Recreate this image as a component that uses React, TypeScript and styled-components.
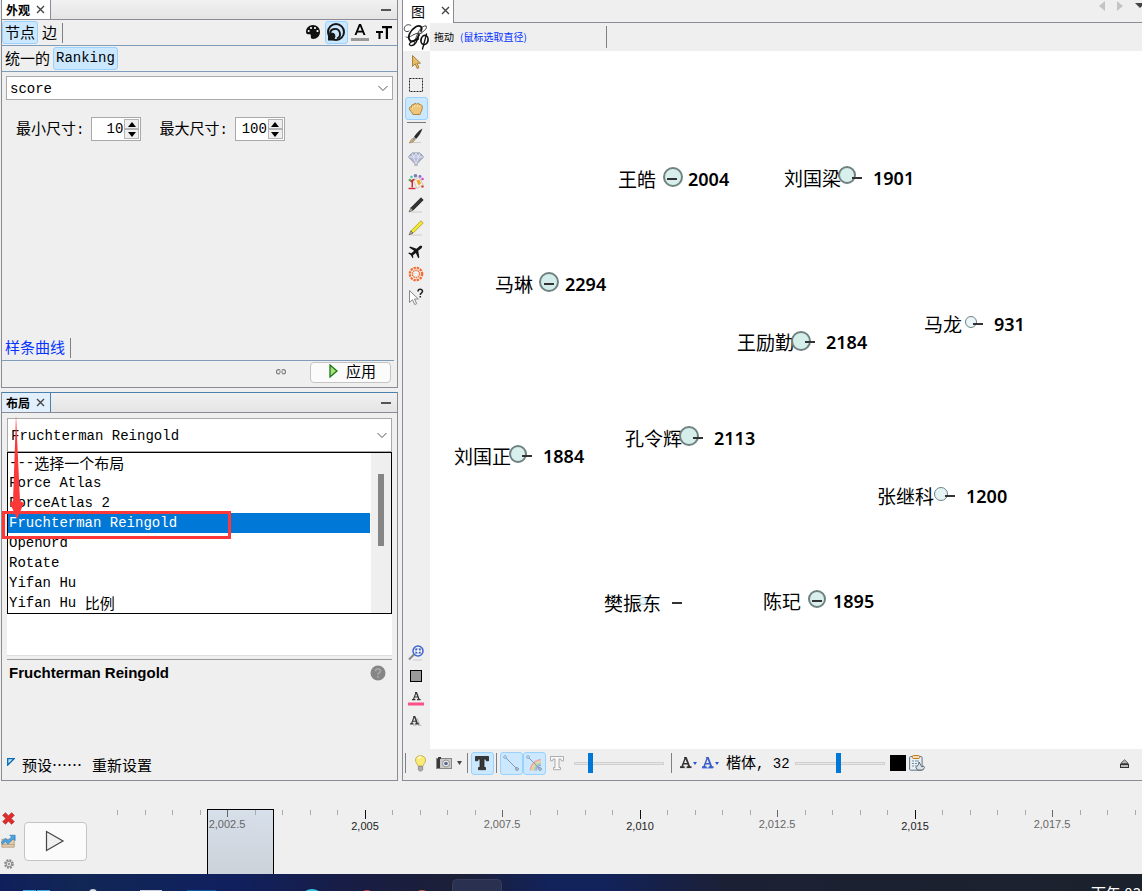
import React from "react";
import styled, { createGlobalStyle, css } from "styled-components";

const cjk = `"Noto Sans CJK SC", sans-serif`;
const mono = `"Liberation Mono", "Noto Sans CJK SC", monospace`;
const line = "#8b8b95";
const blueLine = "#7f9db9";

const GlobalStyle = createGlobalStyle`
  * { box-sizing: border-box; }
  html, body { margin: 0; padding: 0; }
  body { background: #efefef; color: #000; font-family: ${cjk}; font-size: 15px; }
  button, input, select { font: inherit; color: inherit; margin: 0; }
`;

/* ---------- shell ---------- */
const Page = styled.div`
  display: flex;
  flex-direction: column;
  min-height: 100vh;
  overflow: hidden;
`;
const Workspace = styled.main`
  display: flex;
  flex: 1;
  gap: 4px;
  padding-left: 1px;
`;
const Sidebar = styled.div`
  display: flex;
  flex-direction: column;
  flex: none;
  width: 397px;
  gap: 4px;
`;
const Panel = styled.section<{ $basis: number; $open?: boolean }>`
  position: relative;
  display: flex;
  flex-direction: column;
  flex: 1 1 ${(p) => p.$basis}px;
  border: 1px solid ${line};
  ${(p) => p.$open && "border-top: 0;"}
`;

/* ---------- shared parts ---------- */
const TabStrip = styled.header<{ $active?: boolean }>`
  display: flex;
  align-items: stretch;
  height: 20px;
  border-bottom: 1px solid ${line};
  background: linear-gradient(#f1f1f1, #e4e4e4);
  ${(p) => p.$active && "box-shadow: 0 -1px 0 #4a80ab;"}
`;
const Tab = styled.div<{ $active?: boolean }>`
  display: flex;
  align-items: center;
  gap: 6px;
  width: 49px;
  padding-left: 4px;
  font-size: 12px;
  font-weight: 700;
  line-height: 18px;
  background: ${(p) => (p.$active ? "#e2effc" : "#fff")};
  border-right: 1px solid ${(p) => (p.$active ? "#4a80ab" : line)};
`;
const TabClose = styled.button`
  display: flex;
  padding: 0;
  border: 0;
  background: none;
`;
const Minimize = styled.button`
  align-self: center;
  width: 10px;
  height: 2px;
  margin: 0 6px 0 auto;
  padding: 0;
  border: 0;
  background: #555;
`;
const selected = css`
  background: #cce8ff;
  border-color: #99d1ff;
`;
const ToolButton = styled.button<{ $on?: boolean; $w?: number }>`
  display: flex;
  flex: none;
  align-items: center;
  justify-content: center;
  width: ${(p) => p.$w ?? 23}px;
  height: 23px;
  padding: 0 1px 1px 0;
  border: 1px solid transparent;
  border-radius: 3px;
  background: none;
  ${(p) => p.$on && selected}
`;
const TextButton = styled.button<{ $on?: boolean; $mono?: boolean; $link?: boolean }>`
  height: 23px;
  padding: 0 2px 2px;
  border: 1px solid transparent;
  border-radius: 3px;
  background: none;
  white-space: nowrap;
  line-height: 19px;
  color: ${(p) => (p.$link ? "#0433ff" : "#000")};
  ${(p) => p.$mono && `font-family: ${mono}; font-size: 14px; padding-bottom: 0;`}
  ${(p) => p.$on && selected}
`;
const VRule = styled.span<{ $h?: number }>`
  flex: none;
  width: 1px;
  height: ${(p) => p.$h ?? 20}px;
  background: #808080;
`;
const Row = styled.div`
  display: flex;
  align-items: center;
  height: 26px;
  padding-right: 1px;
  border-bottom: 1px solid ${blueLine};
`;
const Push = styled.span`
  flex: 1;
`;
const Latin = styled.span`
  font-family: ${mono};
  font-size: 14px;
`;

/* ---------- combo boxes ---------- */
const Combo = styled.div<{ $h: number }>`
  display: grid;
  align-items: center;
  height: ${(p) => p.$h}px;
  border: 1px solid #a9a9a9;
  background: #fff;
  & > * { grid-area: 1 / 1; }
  & > svg { justify-self: end; margin-right: 4px; pointer-events: none; }
`;
const ComboSelect = styled.select`
  appearance: none;
  width: 100%;
  height: 100%;
  padding: 2px 24px 0 3px;
  border: 0;
  outline: 0;
  background: transparent;
  font-family: ${mono};
  font-size: 14px;
`;
const ComboSlot = styled.div`
  padding: 4px 4px 17px;
`;
const LayoutCombo = styled.div`
  padding: 5px 5px 0;
`;

/* ---------- size spinners ---------- */
const SizeRow = styled.div`
  display: flex;
  gap: 18px;
  padding: 0 14px;
`;
const SizeField = styled.label`
  display: flex;
  align-items: center;
  gap: 7px;
  line-height: 20px;
`;
const SpinBox = styled.span`
  display: flex;
  width: 50px;
  height: 24px;
  padding: 1px;
  border: 1px solid #a9a9a9;
  background: #fff;
`;
const SpinInput = styled.input`
  flex: 1;
  min-width: 0;
  padding: 0 1px 0 0;
  border: 0;
  outline: 0;
  text-align: right;
  font-family: ${mono};
  font-size: 14px;
  appearance: textfield;
  &::-webkit-inner-spin-button { appearance: none; margin: 0; }
`;
const SpinButtons = styled.span`
  display: flex;
  flex-direction: column;
  width: 15px;
`;
const SpinButton = styled.button`
  display: flex;
  flex: 1;
  align-items: center;
  justify-content: center;
  padding: 0;
  border: 1px solid #b4b4b4;
  background: #efefef;
`;

const PanelFoot = styled.div`
  display: flex;
  align-items: center;
  height: 26px;
  padding: 0 6px 4px 0;
  gap: 24px;
`;
const SplineRow = styled(Row)`
  margin-top: auto;
  margin-right: 3px;
  gap: 2px;
`;
const ApplyButton = styled.button`
  display: flex;
  align-items: center;
  justify-content: center;
  gap: 8px;
  width: 81px;
  height: 21px;
  padding: 0 0 2px 4px;
  border: 1px solid #c4c4c4;
  border-radius: 4px;
  background: #fbfbfb;
  line-height: 18px;
`;

/* ---------- layout panel ---------- */
const SheetArea = styled.div`
  position: relative;
  flex: 1;
  margin: 0 5px;
  background: #fff;
  border-bottom: 1px solid #ddd;
`;
const Popup = styled.div`
  position: absolute;
  inset: 0 0 auto 0;
  display: flex;
  border: 1px solid #000;
  background: #fff;
  z-index: 1;
`;
const Options = styled.ul`
  flex: 1;
  margin: 0 1px 0 0;
  padding: 0;
  list-style: none;
`;
const Option = styled.li<{ $on?: boolean }>`
  display: flex;
  align-items: center;
  height: 20px;
  line-height: 20px;
  padding-left: 1px;
  white-space: pre;
  font-family: ${mono};
  font-size: 14px;
  ${(p) => p.$on && "background: #0078d7; color: #fff;"}
`;
const Han = styled.span`
  font-family: ${cjk};
  font-size: 15px;
  line-height: 18px;
`;
const ScrollTrack = styled.div`
  width: 20px;
  padding: 21px 7px 0;
  background: #efefef;
`;
const ScrollThumb = styled.div`
  height: 72px;
  background: #858585;
`;
const Details = styled.div`
  display: flex;
  flex-direction: column;
  height: 121px;
  margin: 3px 5px 0;
  border-top: 1px solid #999;
`;
const DetailsHead = styled.div`
  display: flex;
  align-items: center;
  justify-content: space-between;
  padding: 4px 6px 0 2px;
`;
const DetailsTitle = styled.h2`
  margin: 0;
  font: 700 15px/18px "Liberation Sans", sans-serif;
`;
const DetailsFoot = styled.div`
  display: flex;
  align-items: flex-start;
  margin-top: auto;
  padding-bottom: 3px;
  gap: 4px;
  & > svg { margin-top: 4px; }
`;
const Annotation = styled.svg`
  position: absolute;
  left: 0;
  top: 22px;
  z-index: 2;
  pointer-events: none;
`;

/* ---------- graph window ---------- */
const GraphPanel = styled.section`
  display: flex;
  flex: 1;
  flex-direction: column;
  min-width: 0;
  border-left: 1px solid ${line};
  border-bottom: 1px solid ${line};
`;
const GraphTabs = styled.header`
  display: flex;
  height: 23px;
`;
const GraphTab = styled.div`
  display: flex;
  align-items: center;
  gap: 16px;
  width: 51px;
  padding: 0 0 2px 8px;
  background: #fff;
  border-right: 1px solid ${line};
  font-size: 14px;
  line-height: 18px;
`;
const GraphTabFill = styled.div`
  display: flex;
  flex: 1;
  justify-content: flex-end;
  gap: 12px;
  border-bottom: 1px solid ${line};
  overflow: hidden;
`;
const GraphHead = styled.div`
  display: flex;
  align-items: center;
  height: 28px;
`;
const LogoCell = styled.div`
  width: 27px;
  height: 28px;
  background: #fff;
`;
const Hint = styled.div`
  display: flex;
  gap: 6px;
  width: 176px;
  padding-left: 4px;
  font-size: 10px;
  line-height: 16px;
`;
const HintBlue = styled.span`
  color: #0433ff;
`;
const GraphBody = styled.div`
  display: flex;
  flex: 1;
`;
const Tools = styled.div`
  display: flex;
  flex-direction: column;
  align-items: center;
  width: 27px;
  padding-bottom: 15px;
`;
const HRule = styled.span`
  width: 19px;
  height: 1px;
  margin: 2px 0;
  background: #777;
`;
const Canvas = styled.div`
  position: relative;
  flex: 1;
  background: #fff;
  overflow: hidden;
`;
const Node = styled.div<{ $x: number; $y: number }>`
  position: absolute;
  left: ${(p) => p.$x}px;
  top: ${(p) => p.$y}px;
  display: flex;
  align-items: center;
  height: 24px;
  white-space: nowrap;
`;
const NodeName = styled.span`
  font-family: ${cjk};
  font-size: 19px;
  line-height: 24px;
`;
const NodeDash = styled.span`
  position: relative;
  width: 10px;
  height: 2px;
  margin: 0 11px;
  background: #333;
`;
const NodeScore = styled.span`
  font: 600 18px/24px "Noto Sans", sans-serif;
`;
const Dot = styled.span<{ $x: number; $y: number; $r: number; $fill: string }>`
  position: absolute;
  left: ${(p) => p.$x - p.$r}px;
  top: ${(p) => p.$y - p.$r}px;
  width: ${(p) => p.$r * 2}px;
  height: ${(p) => p.$r * 2}px;
  border: ${(p) => (p.$r > 7 ? 2 : 1)}px solid ${(p) => (p.$r > 4 ? "#6f8280" : "#a9c9cb")};
  border-radius: 50%;
  background: ${(p) => p.$fill};
`;
const GraphFoot = styled.div`
  display: flex;
  align-items: center;
  height: 31px;
  padding: 0 10px 3px 2px;
`;
const Group = styled.div<{ $gap?: number; $left?: number; $right?: number }>`
  display: flex;
  align-items: center;
  gap: ${(p) => p.$gap ?? 0}px;
  padding-left: ${(p) => p.$left ?? 0}px;
  padding-right: ${(p) => p.$right ?? 0}px;
`;
const Range = styled.input`
  appearance: none;
  flex: none;
  width: 90px;
  height: 20px;
  background: none;
  &::-webkit-slider-runnable-track {
    height: 3px;
    border: 1px solid #d0d0d0;
    background: #e7e7e7;
  }
  &::-webkit-slider-thumb {
    appearance: none;
    width: 5px;
    height: 20px;
    margin-top: -10px;
    background: #0078d7;
  }
`;
const FontButton = styled(TextButton)`
  padding: 0;
  border: 0;
`;
const Swatch = styled.button`
  width: 16px;
  height: 16px;
  padding: 0;
  border: 0;
  background: #000;
`;

/* ---------- timeline ---------- */
const Timeline = styled.footer`
  display: flex;
  height: 93px;
  padding-top: 26px;
`;
const TimelineIcons = styled.div`
  display: flex;
  flex-direction: column;
  align-items: center;
  width: 18px;
`;
const PlayButton = styled.button`
  display: flex;
  align-items: center;
  justify-content: center;
  flex: none;
  width: 63px;
  height: 39px;
  margin: 15px 0 0 6px;
  padding: 0 2px 2px 0;
  border: 1px solid #c4c4c4;
  border-radius: 4px;
  background: #fbfbfb;
`;
const Scale = styled.svg`
  flex: 1;
  min-width: 0;
  height: 65px;
  margin-top: 2px;
  font-family: "Liberation Sans", sans-serif;
  font-size: 11px;
`;
const Taskbar = styled.div`
  display: flex;
  height: 17px;
  overflow: hidden;
  background: linear-gradient(90deg, #101f5c 0%, #112754 7%, #10205f 20%, #171d46 30%, #1c1f36 40%, #12225a 48%, #12225a 53%, #1c2034 64%, #1b222c 100%);
`;
const TaskIcons = styled.svg`
  flex: 1;
  height: 17px;
`;
const Clock = styled.span`
  flex: none;
  width: 51px;
  padding-top: 10px;
  overflow: hidden;
  color: #fff;
  font-size: 15px;
  line-height: 18px;
  white-space: nowrap;
`;

/* ---------- drawings ---------- */
const Close = () => (
  <svg width="9" height="9" viewBox="0 0 9 9" stroke="#444" strokeWidth="1.4">
    <path d="M1 1 8 8M8 1 1 8" />
  </svg>
);
const Chevron = () => (
  <svg width="10" height="7" viewBox="0 0 10 7" fill="none" stroke="#555">
    <path d="M.5 1 5 5.5 9.5 1" />
  </svg>
);
const Caret = ({ up }: { up?: boolean }) => (
  <svg width="8" height="5" viewBox="0 0 8 5">
    <path d={up ? "M0 5 4 0 8 5z" : "M0 0 8 0 4 5z"} />
  </svg>
);
const SmallCaret = ({ color }: { color: string }) => (
  <svg width="4" height="3" viewBox="0 0 4 3" fill={color}>
    <path d="M0 0H4L2 3z" />
  </svg>
);
const Palette = () => (
  <svg width="14" height="14" viewBox="0 0 14 14">
    <path d="M7 0C3 0 0 3 0 6.7 0 9 1.200 9.500 3.500 9.300 4.800 9.200 5 10 4.800 11.500 4.700 13.200 5.600 14 7 14 11 14 14 11 14 7S11 0 7 0z" fill="#111" />
    <g fill="#fff">
      <circle cx="2.700" cy="6" r="1" /><circle cx="5" cy="3" r="1.100" /><circle cx="9" cy="3" r="1.100" /><circle cx="11.500" cy="6" r="1.100" />
    </g>
  </svg>
);
const SizeRings = () => (
  <svg width="18" height="18" viewBox="0 0 18 18" fill="none" stroke="#161616">
    <circle cx="9" cy="9" r="8" strokeWidth="2" />
    <path d="M3 10.500A5 5 0 1 1 10 15.500" strokeWidth="1.900" />
    <circle cx="4.800" cy="13.200" r="3.200" fill="#161616" />
    <path d="M1 11v6.500h6z" fill="#161616" stroke="none" />
  </svg>
);
const ColorLetter = () => (
  <svg width="18" height="18" viewBox="0 0 18 18">
    <path d="M8 1 3.500 12h2l1-2.500h5l1 2.500h2L10 1zM7.200 7.800 9 3.200l1.800 4.600z" />
    <path d="M0 15h18v3H0z" fill="#999" />
  </svg>
);
const SizeLetters = () => (
  <svg width="16" height="13" viewBox="0 0 16 13">
    <path d="M6 0h10v2.200h-4V13H9.800V2.200H6zM0 5h7v2H4.500v6h-2V7H0z" />
  </svg>
);
const Link = () => (
  <svg width="10" height="6" viewBox="0 0 10 6" fill="none" stroke="#7a7a7a">
    <path d="M4 1.500C4 .5 1 .2.600 2S1 5.500 4 4.500M6 1.500c0-1 3-1.300 3.400.5S9 5.500 6 4.500M3 3h4" strokeWidth="1.200" />
  </svg>
);
const GreenPlay = () => (
  <svg width="9" height="14" viewBox="0 0 9 14">
    <path d="M1 1 8 7 1 13z" fill="#a8e080" stroke="#18790f" strokeWidth="1.300" />
  </svg>
);
const Help = () => (
  <svg width="16" height="16" viewBox="0 0 16 16">
    <circle cx="8" cy="8" r="7.500" fill="#868686" />
    <path d="M5.500 6.200C5.500 3 10.500 3 10.500 6 10.500 7.800 8 7.600 8 9.800M8 11v1.700" fill="none" stroke="#aaa" strokeWidth="1.600" />
  </svg>
);
const Preset = () => (
  <svg width="8" height="8" viewBox="0 0 8 8">
    <path d="M.7 .7h6.400l-6.400 6.400z" fill="#bfe3f7" stroke="#0869b5" strokeWidth="1.300" />
  </svg>
);
const GephiLogo = () => (
  <svg width="27" height="28" viewBox="0 0 27 28" fill="none" stroke="#111" strokeLinecap="round">
    <path d="M18 8C20 4 17 1.500 12.500 4 7 7.500 4 14 7 17.500c3 2.500 7.500-1 9-5.500" strokeWidth="1.800" />
    <path d="M16 11c-1 6-4 12.500-8.500 11.500-3-1 0-4.500 8-6.500" strokeWidth="1.300" />
    <path d="M6 8C3 10 .5 7.500 1.500 4.500S6 1 8 2.500M3 14c2 1.500 5-1 8-2.500 3-1.500 5-1.500 7-1" strokeWidth=".8" />
    <path d="M23 3C18 2 14 10 11 21M23 3c2 1-1 5-5 7" strokeWidth=".8" />
    <ellipse cx="21.500" cy="17" rx="3.500" ry="4.600" strokeWidth="1.700" transform="rotate(12 21.500 17)" />
    <path d="M23.500 11 19.500 26" strokeWidth="1.300" />
  </svg>
);

const Pointer = () => (
  <svg width="16" height="16" viewBox="0 0 16 16">
    <path d="M4.500 1.500v11l2.700-2.700 2 4.700 1.800-.8-2-4.500h3.500z" fill="#e7bd6c" stroke="#a17a32" strokeWidth=".9" />
  </svg>
);
const Marquee = () => (
  <svg width="16" height="16" viewBox="0 0 16 16">
    <rect x="1.500" y="1.500" width="13" height="13" fill="none" stroke="#222" strokeDasharray="2 1" />
  </svg>
);
const Hand = () => (
  <svg width="16" height="16" viewBox="0 0 16 16">
    <path d="M5 14.500C4.500 12.500 1.500 10.500 1.300 8.500 1.200 7 2.800 6.500 3.700 7.300 2.700 5 4.600 3.800 5.800 5 5.900 3 8.100 2.800 8.700 4.300 9.500 2.700 11.600 3.200 11.700 5 13.200 4.400 14.500 5.500 14.300 7.500 14.200 11 12.500 12 12 14.500z" fill="#efc678" stroke="#a87b34" strokeWidth=".9" />
    <path d="M4.500 8.500V7M6.700 7V5.500M9.200 6.500V5M11.700 7V5.500" stroke="#fff0c8" fill="none" />
  </svg>
);
const Brush = () => (
  <svg width="16" height="16" viewBox="0 0 16 16">
    <path d="M4 14.500h9" stroke="#ccc" /><path d="M14.500.5C10 3 7 7 6 9l2 2c3-3 5-6 6.500-10.500z" fill="#2b2b2b" />
    <path d="M6 9l2 2-1.500 1.500-2-2z" fill="#999" /><path d="M4.500 10.500l2 2C5 15 3 14.500 1 15c1.500-1 1.500-3.500 3.500-4.500z" fill="#c8a873" stroke="#8c744b" strokeWidth=".5" />
  </svg>
);
const Diamond = () => (
  <svg width="16" height="14" viewBox="0 0 16 14">
    <path d="M4 1h8l3.500 4L8 12.500.5 5z" fill="#b9bdd6" stroke="#7f84a2" strokeWidth=".9" />
    <path d="M.5 5h15M4 1l1.500 4L8 12.500 10.500 5 12 1M5.500 5 8 1l2.500 4" fill="none" stroke="#eef0fa" strokeWidth=".7" />
    <path d="M6 13h4" stroke="#999" />
  </svg>
);
const Paint = () => (
  <svg width="16" height="16" viewBox="0 0 16 16">
    <circle cx="1.800" cy="6" r="1.300" fill="#49b84f" /><circle cx="3.500" cy="3" r="1.300" fill="#57c5c5" /><circle cx="7.500" cy="1.800" r="1.800" fill="#777fa8" /><circle cx="12" cy="2.500" r="1.400" fill="#9063d8" /><circle cx="14.500" cy="5" r="1.300" fill="#d04dc6" /><circle cx="14.500" cy="12.500" r="1.300" fill="#d94c32" />
    <path d="M2 7.500C3 5.500 6 4.500 7 5L5 8v5.500H3.500V8.500z" fill="#c93336" />
    <path d="M5.500 7 11 3l4 7.500-6 4z" fill="#f4f0ea" stroke="#b5aba0" strokeWidth=".6" /><path d="M8.500 6.500l3-1 1.500 4-2.500 2z" fill="#efa626" /><path d="M.5 14.500h7" stroke="#d4333c" strokeWidth="1.500" />
  </svg>
);
const Pencil = ({ body, edge }: { body: string; edge: string }) => (
  <svg width="16" height="16" viewBox="0 0 16 16">
    <path d="M3 15h11" stroke="#ccc" /><path d="M13 .8 15.200 3 5 13.200 2.800 11z" fill={body} stroke={edge} strokeWidth=".7" />
    <path d="M2.800 11 5 13.200 1 15z" fill="#c0b18d" stroke="#444" strokeWidth=".6" />
  </svg>
);
const Plane = () => (
  <svg width="16" height="16" viewBox="0 0 24 24">
    <path transform="rotate(50 12 12)" fill="#151515" d="M22.500 16.500v-2.200l-8.500-5V3c0-1-.8-2.500-2-2.500S10 2 10 3v6.300l-8.500 5v2.200L10 14v5.500l-3 2V23l5-1.200L17 23v-1.500l-3-2V14z" />
  </svg>
);
const Sun = () => (
  <svg width="16" height="16" viewBox="0 0 16 16" fill="none" stroke="#f4692b">
    <circle cx="8" cy="8" r="6.200" strokeWidth="2.200" strokeDasharray="2.300 .95" /><circle cx="8" cy="8" r="3.600" strokeWidth="1.400" strokeDasharray="1.500 .76" />
  </svg>
);
const PointerHelp = () => (
  <svg width="16" height="18" viewBox="0 0 16 18">
    <path d="M1.500 2.500v12l3-2.800 2.200 4.800 2-.8-2.200-4.700h3.800z" fill="#fff" stroke="#888" />
    <path d="M10 3.500C10 .7 14.500.7 14.500 3.200 14.500 5 12.300 4.700 12.300 7M12.300 8v1.600" fill="none" stroke="#222" strokeWidth="1.500" />
  </svg>
);
const Magnifier = () => (
  <svg width="16" height="16" viewBox="0 0 16 16" fill="none">
    <path d="M5 15h9" stroke="#ccc" /><path d="M1 14.500 6 9.500" stroke="#888" strokeWidth="2.200" /><circle cx="10" cy="6" r="5" stroke="#3f63cf" strokeWidth="1.500" fill="#eff4ff" />
    <path d="M8 5.500V4h1.500M10.700 4H12v1.500M12 6.700V8h-1.300M9.500 8H8V6.700" stroke="#183c9e" strokeWidth="1.200" />
  </svg>
);
const GreySquare = () => (
  <svg width="12" height="12" viewBox="0 0 12 12"><rect x=".5" y=".5" width="11" height="11" fill="#999" stroke="#000" /></svg>
);
const serifA = "M3.500 0h2.300l3 8H10v1.500H5.800V8H7l-.5-1.500H3.200L2.700 8H4v1.500H0V8h1.200L3.700 1.500zM4.800 2 3.600 5.200h2.500z";
const LabelColor = () => (
  <svg width="16" height="14" viewBox="0 0 16 14">
    <path d={serifA} transform="translate(4 0) scale(.86)" fill="#333" /><path d="M0 10.500h16v3H0z" fill="#ff4f88" />
  </svg>
);
const LabelShadow = () => (
  <svg width="12" height="12" viewBox="0 0 12 12">
    <path d={serifA} transform="translate(3 2) scale(.85)" fill="#c8c8c8" /><path d={serifA} transform="scale(.9)" fill="#333" />
  </svg>
);
const Letter = ({ color, shade }: { color: string; shade: string }) => (
  <svg width="12" height="12" viewBox="0 0 12 12">
    <path d="M0 11h11" stroke={shade} strokeWidth="2" /><path d={serifA} transform="scale(1.150)" fill={color} />
  </svg>
);
const BigT = ({ outline }: { outline?: boolean }) => (
  <svg width="16" height="16" viewBox="0 0 16 16">
    <path d="M1.500 1.500h13v4.300h-2.200L11.800 4H10v8.500h1.500v2.200h-7v-2.200H6V4H4.200l-.5 1.800H1.500z" fill={outline ? "#f8f8f8" : "#383838"} stroke={outline ? "#9b9b9b" : "#222"} strokeWidth=".8" />
  </svg>
);
const Bulb = () => (
  <svg width="13" height="17" viewBox="0 0 13 17">
    <path d="M4 11C3.500 8.500 1.500 8 1.500 5 1.500 2.500 3.500.7 6.500.7S11.500 2.500 11.500 5c0 3-2 3.500-2.500 6z" fill="#f8ec77" stroke="#c9aa4a" strokeWidth=".9" />
    <path d="M4 3.500C5 2 7 2 7 2" stroke="#fff" strokeWidth="1.300" fill="none" /><path d="M4.300 11.500h4.400v3.500L7.500 16h-2l-1.200-1z" fill="#aaa" stroke="#777" strokeWidth=".6" />
  </svg>
);
const Camera = () => (
  <svg width="16" height="14" viewBox="0 0 16 14">
    <rect x=".5" y="2.500" width="15" height="10" fill="#c9c9c9" stroke="#888" /><path d="M2 1h3v2H2zM1 3h3v9H1z" fill="#3a3a3a" /><circle cx="10" cy="7.500" r="3.500" fill="#e8e8e8" stroke="#888" strokeWidth=".8" /><circle cx="10" cy="7.500" r="1.800" fill="#56698f" />
  </svg>
);
const Edge = ({ rainbow }: { rainbow?: boolean }) => (
  <svg width="16" height="16" viewBox="0 0 16 16" fill="none">
    {rainbow && (
      <g strokeWidth="1.700" opacity=".85">
        <path d="M4.500 15.500C5 9 9 5.500 15 4.500" stroke="#f19d9d" /><path d="M6.500 15.500C7 10 10 7 15 6.500" stroke="#f1cf74" /><path d="M8.300 15.500C8.800 11 11 9 15 8.300" stroke="#9ad796" /><path d="M10 15.500c.3-3 2-5 5-5.500" stroke="#a495df" />
      </g>
    )}
    <path d="M3 3 13 13" stroke="#7999bd" /><circle cx="2" cy="2" r="1.300" fill="#fff" stroke="#6b8fb8" strokeWidth=".8" /><circle cx="14" cy="14" r="1.300" fill="#fff" stroke="#44658c" strokeWidth=".8" />
  </svg>
);
const Clipboard = () => (
  <svg width="16" height="16" viewBox="0 0 16 16">
    <rect x=".6" y="1.600" width="12.500" height="13.600" rx="1" fill="#e8eef2" stroke="#657684" /><rect x="3.500" y=".5" width="7" height="3" rx="1" fill="#f8ddb0" stroke="#ba7c24" />
    <path d="M3 6h2M6 6h4M3 8.500h2M6 8.500h2M3 11h2M6 11h2" stroke="#7690a5" /><path d="M10 7 9.500 9.500 7 12.500 8.500 15h5.500l1.500-2.500-1-1.500-1.500 1-1-1.500z" fill="#dce3e8" stroke="#4e5f6c" strokeWidth=".9" />
  </svg>
);
const Eject = () => (
  <svg width="9" height="9" viewBox="0 0 9 9" fill="#bbb" stroke="#333">
    <path d="M.7 4.500 4.500.8l3.800 3.700z" strokeWidth=".8" /><rect x=".5" y="5.500" width="8" height="3" />
  </svg>
);
const RedX = () => (
  <svg width="13" height="13" viewBox="0 0 13 13"><path d="M3.500.7 6.500 4l3-3.300 2.800 2.600-3.100 3.200 3.100 3.200-2.800 2.600-3-3.300-3 3.300L.7 9.700l3.100-3.200L.7 3.300z" fill="#df2c2c" stroke="#a31717" strokeWidth=".6" /></svg>
);
const Trend = () => (
  <svg width="16" height="16" viewBox="0 0 17 16">
    <path d="M1 6h14v9H1z" fill="#e0cdb0" stroke="#a58b68" strokeWidth=".8" /><path d="M1 12h14" stroke="#b7a387" />
    <path d="M.5 9.500 5 5l3 2.500L12 3.500 10 1.500h6v6l-2-2-6 6-3-3-3.500 3z" fill="#4ba6e5" stroke="#1f6fb6" strokeWidth=".7" />
  </svg>
);
const Gear = () => (
  <svg width="10" height="10" viewBox="0 0 10 10" fill="none" stroke="#858585">
    <circle cx="5" cy="5" r="4" strokeDasharray="2 1.140" strokeWidth="1.600" /><circle cx="5" cy="5" r="2.800" /><circle cx="5" cy="5" r=".8" />
  </svg>
);
const WhitePlay = () => (
  <svg width="20" height="22" viewBox="0 0 20 22"><path d="M1.500 1.500v19L18 11z" fill="#f0f0f0" stroke="#444" strokeWidth="1.200" /></svg>
);

/* ---------- data ---------- */
const layouts = ["Force Atlas", "ForceAtlas 2", "Fruchterman Reingold", "OpenOrd", "Rotate", "Yifan Hu"];

// x, y: label corner on the canvas; cx, cy, r: circle measured from that corner
const players = [
  { name: "王皓", score: "2004", x: 188, y: 116, cx: 55, cy: 10, r: 10, fill: "#d8efec" },
  { name: "刘国梁", score: "1901", x: 354, y: 115, cx: 63, cy: 9, r: 9, fill: "#d9efed" },
  { name: "马琳", score: "2294", x: 65, y: 221, cx: 54, cy: 10, r: 10, fill: "#d2edea" },
  { name: "王励勤", score: "2184", x: 307, y: 279, cx: 64, cy: 11, r: 10, fill: "#d4eeea" },
  { name: "马龙", score: "931", x: 494, y: 261, cx: 47, cy: 10, r: 6, fill: "#eaf6fa" },
  { name: "孔令辉", score: "2113", x: 195, y: 375, cx: 64, cy: 10, r: 10, fill: "#d5eeeb" },
  { name: "刘国正", score: "1884", x: 24, y: 393, cx: 64, cy: 10, r: 9, fill: "#d9efed" },
  { name: "张继科", score: "1200", x: 447, y: 433, cx: 64, cy: 10, r: 7, fill: "#e4f4f4" },
  { name: "樊振东", score: "", x: 174, y: 540, cx: 39, cy: 10, r: 4, fill: "#eefafb" },
  { name: "陈玘", score: "1895", x: 333, y: 538, cx: 54, cy: 10, r: 9, fill: "#d9efed" },
];

const paintTools: [string, React.ReactNode][] = [
  ["Brush", <Brush />],
  ["Size", <Diamond />],
  ["Painter", <Paint />],
  ["Node pencil", <Pencil body="#333" edge="#111" />],
  ["Edge pencil", <Pencil body="#f3e72e" edge="#9d9318" />],
  ["Shortest path", <Plane />],
  ["Heat map", <Sun />],
  ["Edit", <PointerHelp />],
];

const tickStep = 27.5;
const ticks = Array.from({ length: 38 }, (_, i) => ({ i, x: Math.round(30 + i * tickStep) }));

/* ---------- sections ---------- */
function SizeSpinner({ label, value }: { label: string; value: number }) {
  return (
    <SizeField>
      <span>{label}<Latin>:</Latin></span>
      <SpinBox>
        <SpinInput type="number" defaultValue={value} />
        <SpinButtons>
          <SpinButton type="button" aria-label="增加"><Caret up /></SpinButton>
          <SpinButton type="button" aria-label="减少"><Caret /></SpinButton>
        </SpinButtons>
      </SpinBox>
    </SizeField>
  );
}

function Appearance() {
  return (
    <Panel $basis={388} $open>
      <TabStrip>
        <Tab>外观<TabClose aria-label="关闭"><Close /></TabClose></Tab>
        <Minimize aria-label="最小化" />
      </TabStrip>
      <Row>
        <TextButton $on>节点</TextButton>
        <Group $left={1} $right={2}><TextButton>边</TextButton></Group>
        <VRule />
        <Push />
        <ToolButton aria-label="颜色"><Palette /></ToolButton>
        <ToolButton $on aria-label="尺寸"><SizeRings /></ToolButton>
        <ToolButton $w={25} aria-label="标签颜色"><ColorLetter /></ToolButton>
        <ToolButton aria-label="标签尺寸"><SizeLetters /></ToolButton>
      </Row>
      <Row>
        <TextButton>统一的</TextButton>
        <TextButton $on $mono>Ranking</TextButton>
      </Row>
      <ComboSlot>
        <Combo $h={24}>
          <ComboSelect aria-label="排序属性"><option>score</option></ComboSelect>
          <Chevron />
        </Combo>
      </ComboSlot>
      <SizeRow>
        <SizeSpinner label="最小尺寸" value={10} />
        <SizeSpinner label="最大尺寸" value={100} />
      </SizeRow>
      <SplineRow>
        <TextButton $link>样条曲线</TextButton>
        <VRule />
      </SplineRow>
      <PanelFoot>
        <Push />
        <Link />
        <ApplyButton><GreenPlay />应用</ApplyButton>
      </PanelFoot>
    </Panel>
  );
}

function LayoutPanel() {
  return (
    <Panel $basis={389}>
      <TabStrip $active>
        <Tab $active>布局<TabClose aria-label="关闭"><Close /></TabClose></Tab>
        <Minimize aria-label="最小化" />
      </TabStrip>
      <LayoutCombo>
        <Combo $h={34}>
          <ComboSelect aria-label="布局"><option>Fruchterman Reingold</option></ComboSelect>
          <Chevron />
        </Combo>
      </LayoutCombo>
      <SheetArea>
        <Popup>
          <Options role="listbox" aria-label="布局">
            <Option role="option">---<Han>选择一个布局</Han></Option>
            {layouts.map((name) => (
              <Option key={name} role="option" $on={name === "Fruchterman Reingold"}>{name}</Option>
            ))}
            <Option role="option">{"Yifan Hu "}<Han>比例</Han></Option>
          </Options>
          <ScrollTrack><ScrollThumb /></ScrollTrack>
        </Popup>
      </SheetArea>
      <Details>
        <DetailsHead><DetailsTitle>Fruchterman Reingold</DetailsTitle><Help /></DetailsHead>
        <DetailsFoot>
          <Preset />
          <TextButton>预设…… </TextButton>
          <TextButton>重新设置</TextButton>
        </DetailsFoot>
      </Details>
      <Annotation width="232" height="126" viewBox="0 0 232 126">
        <path d="M14 0 18 86 22 88 15 104 8 88 11 86z" fill="#fc3838" />
        <rect x="1.500" y="97.500" width="226" height="25" fill="none" stroke="#fc3838" strokeWidth="3" />
      </Annotation>
    </Panel>
  );
}

function Graph() {
  return (
    <GraphPanel>
      <GraphTabs>
        <GraphTab>图<TabClose aria-label="关闭"><Close /></TabClose></GraphTab>
        <GraphTabFill>
          <svg width="6" height="12" viewBox="0 0 6 12"><path d="M6 1v10L0 6z" fill="#c4c4c4" /></svg>
          <svg width="6" height="12" viewBox="0 0 6 12"><path d="M0 1v10l6-5z" fill="#c4c4c4" /></svg>
          <svg width="7" height="12" viewBox="0 0 7 12"><path d="M0 3h10L5 8z" fill="#444" /></svg>
        </GraphTabFill>
      </GraphTabs>
      <GraphHead>
        <LogoCell><GephiLogo /></LogoCell>
        <Hint><span>拖动</span><HintBlue>(鼠标选取直径)</HintBlue></Hint>
        <VRule $h={22} />
      </GraphHead>
      <GraphBody>
        <Tools>
          <ToolButton aria-label="选择"><Pointer /></ToolButton>
          <ToolButton aria-label="框选"><Marquee /></ToolButton>
          <ToolButton $on aria-label="拖动"><Hand /></ToolButton>
          <HRule />
          {paintTools.map(([name, icon]) => (
            <ToolButton key={name} aria-label={name}>{icon}</ToolButton>
          ))}
          <Push />
          <ToolButton aria-label="居中"><Magnifier /></ToolButton>
          <ToolButton aria-label="重置颜色"><GreySquare /></ToolButton>
          <ToolButton aria-label="重置标签颜色"><LabelColor /></ToolButton>
          <ToolButton aria-label="重置标签尺寸"><LabelShadow /></ToolButton>
        </Tools>
        <Canvas>
          {players.map((p) => (
            <Node key={p.name} $x={p.x} $y={p.y}>
              <NodeName>{p.name}</NodeName>
              <Dot $x={p.cx} $y={p.cy} $r={p.r} $fill={p.fill} />
              <NodeDash />
              <NodeScore>{p.score}</NodeScore>
            </Node>
          ))}
        </Canvas>
      </GraphBody>
      <GraphFoot>
        <VRule />
        <Group $gap={9} $left={8} $right={5}>
          <Bulb />
          <Camera />
        </Group>
        <Group $right={5}>
          <svg width="5" height="4" viewBox="0 0 5 4"><path d="M0 0h5L2.500 4z" fill="#444" /></svg>
        </Group>
        <VRule />
        <Group $left={3} $right={2}><ToolButton $on aria-label="节点标签"><BigT /></ToolButton></Group>
        <VRule />
        <Group $left={3}>
          <ToolButton $on aria-label="显示边"><Edge /></ToolButton>
          <ToolButton $on aria-label="边颜色"><Edge rainbow /></ToolButton>
          <ToolButton aria-label="边标签"><BigT outline /></ToolButton>
        </Group>
        <Group $left={5} $right={7}><Range type="range" aria-label="边粗细" defaultValue={16} /></Group>
        <VRule />
        <Group $gap={1} $left={8} $right={5}><Letter color="#333" shade="#ddd" /><SmallCaret color="#2456d6" /></Group>
        <Group $gap={1} $right={7}><Letter color="#3b5fc4" shade="#a4b9ef" /><SmallCaret color="#2456d6" /></Group>
        <FontButton>楷体<Latin>, 32</Latin></FontButton>
        <Group $left={5} $right={5}><Range type="range" aria-label="字体大小" defaultValue={49} /></Group>
        <Group $gap={3}><Swatch aria-label="标签颜色" /><Clipboard /></Group>
        <Push />
        <Group $right={3}><Eject /></Group>
      </GraphFoot>
    </GraphPanel>
  );
}

function TimelineBar() {
  return (
    <Timeline>
      <TimelineIcons>
        <ToolButton $w={18} aria-label="关闭时间轴"><RedX /></ToolButton>
        <ToolButton $w={18} aria-label="图表"><Trend /></ToolButton>
        <ToolButton $w={18} aria-label="设置"><Gear /></ToolButton>
      </TimelineIcons>
      <PlayButton aria-label="播放"><WhitePlay /></PlayButton>
      <Scale>
        <defs>
          <linearGradient id="window" x1="0" y1="0" x2="0" y2="1">
            <stop offset="0" stopColor="#d7dfea" /><stop offset="1" stopColor="#cad1d8" />
          </linearGradient>
        </defs>
        <rect x="120.500" y=".5" width="66" height="70" fill="url(#window)" stroke="#000" />
        {ticks.map(({ i, x }) => {
          const major = (i - 9) % 10 === 0;
          const half = (i - 4) % 10 === 0;
          const value = 2002.5 + ((i - 4) / 5) * 2.5;
          return (
            <g key={i}>
              <path d={`M${x + 0.5} 1v${major ? 9 : half ? 7 : 5}`} stroke={major ? "#111" : half ? "#666" : "#aaa"} />
              {(major || half) && (
                <text x={x} y={major ? 21 : 19} textAnchor="middle" fill={major ? "#222" : "#666"}>
                  {value.toLocaleString("en-US")}
                </text>
              )}
            </g>
          );
        })}
      </Scale>
    </Timeline>
  );
}

export default function App() {
  return (
    <Page>
      <GlobalStyle />
      <Workspace>
        <Sidebar>
          <Appearance />
          <LayoutPanel />
        </Sidebar>
        <Graph />
      </Workspace>
      <TimelineBar />
      <Taskbar>
        <TaskIcons>
          <path d="M23 16h13v2H23zM37 16h13v2H37z" fill="#3aa6df" /><circle cx="93" cy="19" r="4" fill="#ddd" />
          <path d="M140 16h22v2h-22z" fill="#c7ccd8" /><path d="M187 16h29v2h-29z" fill="#0c59a8" />
          <circle cx="312" cy="27" r="12" fill="#36c3dd" /><circle cx="367" cy="24" r="8" fill="#c94449" /><circle cx="422" cy="24" r="8" fill="#cf6442" />
          <rect x="452.500" y="5.500" width="49" height="20" rx="4" fill="#2a3050" stroke="#353c5c" />
        </TaskIcons>
        <Clock>下午 03</Clock>
      </Taskbar>
    </Page>
  );
}
